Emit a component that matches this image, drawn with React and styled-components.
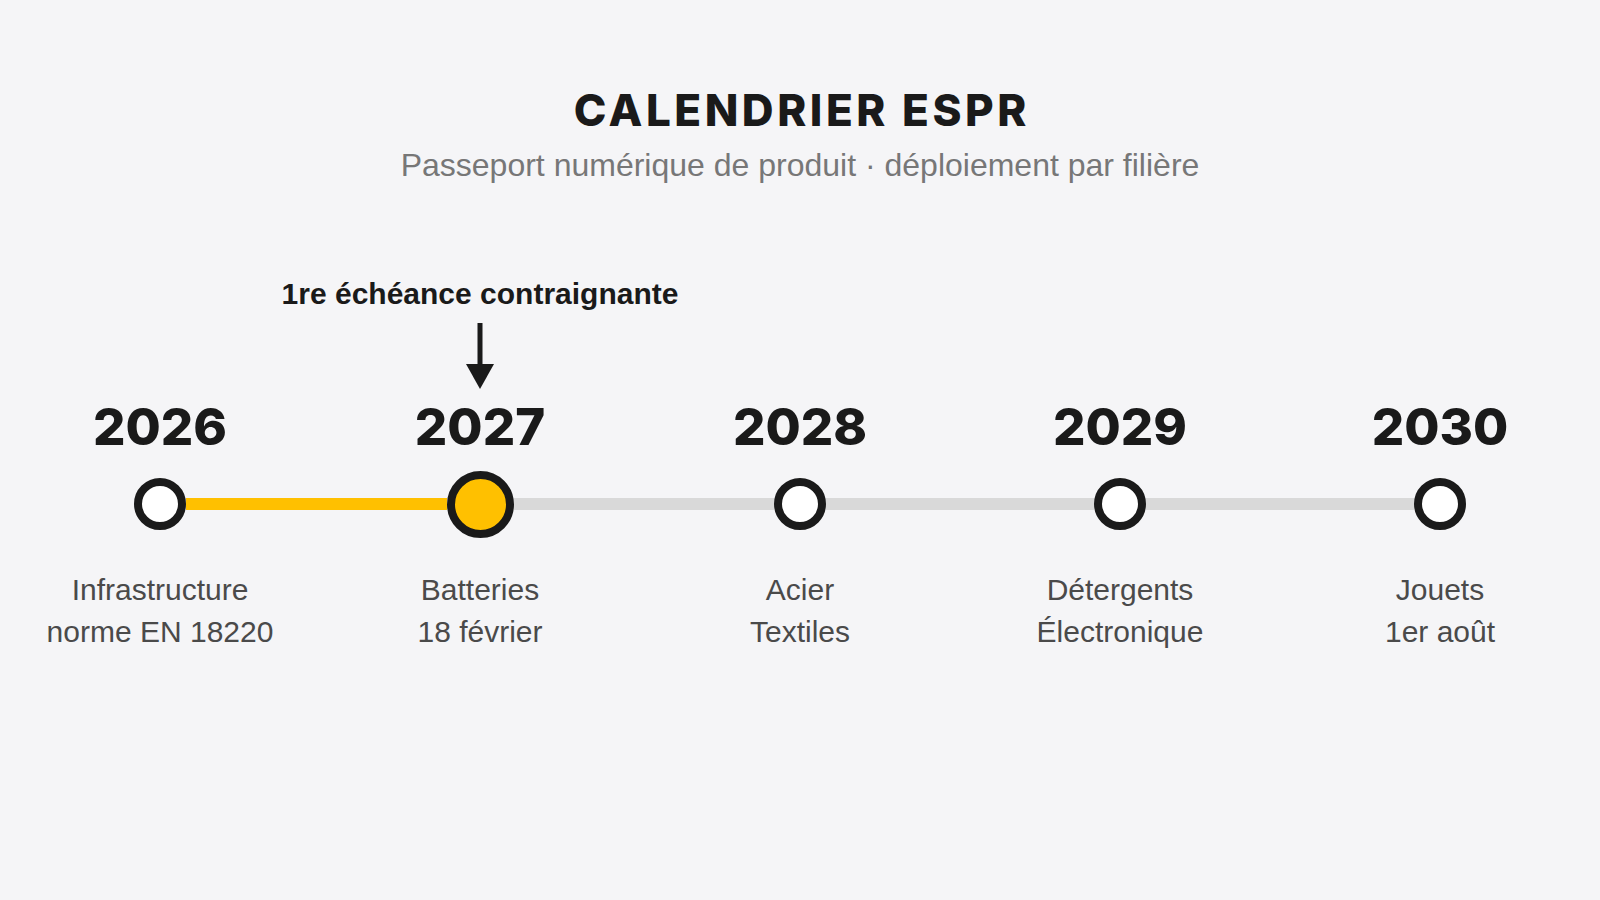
import React from 'react';
import styled, { createGlobalStyle } from 'styled-components';

const milestones = [
  { year: '2026', lines: ['Infrastructure', 'norme EN 18220'] },
  { year: '2027', lines: ['Batteries', '18 février'], active: true, note: '1re échéance contraignante' },
  { year: '2028', lines: ['Acier', 'Textiles'] },
  { year: '2029', lines: ['Détergents', 'Électronique'] },
  { year: '2030', lines: ['Jouets', '1er août'] },
];

const YELLOW = '#ffc000';
const GREY = '#d9d9d9';

function App() {
  const activeIndex = milestones.findIndex((m) => m.active);

  return (
    <>
      <GlobalStyle />
      <StyledPage>
        <StyledHeader>
          <StyledTitle>CALENDRIER ESPR</StyledTitle>
          <StyledSubtitle>Passeport numérique de produit · déploiement par filière</StyledSubtitle>
        </StyledHeader>
        <StyledTimeline>
          {milestones.map((m, i) => (
            <StyledColumn key={m.year}>
              <StyledMarkerSlot>
                {m.note && (
                  <>
                    <StyledNote>{m.note}</StyledNote>
                    <svg width="28" height="66" viewBox="0 0 28 66">
                      <rect x="11.5" y="0" width="5" height="42" fill="#1a1a1a" />
                      <polygon points="0,41 28,41 14,66" fill="#1a1a1a" />
                    </svg>
                  </>
                )}
              </StyledMarkerSlot>
              <StyledYear>{m.year}</StyledYear>
              <StyledDotRow>
                <StyledSegment $color={i === 0 ? 'transparent' : i <= activeIndex ? YELLOW : GREY} />
                <StyledDot $active={m.active} />
                <StyledSegment
                  $color={i === milestones.length - 1 ? 'transparent' : i < activeIndex ? YELLOW : GREY}
                />
              </StyledDotRow>
              <StyledLabel>
                {m.lines.map((line) => (
                  <div key={line}>{line}</div>
                ))}
              </StyledLabel>
            </StyledColumn>
          ))}
        </StyledTimeline>
      </StyledPage>
    </>
  );
}

export default App;

const GlobalStyle = createGlobalStyle`
  html, body {
    margin: 0;
    padding: 0;
    background: #f5f5f7;
  }
  body {
    font-family: "Liberation Sans", Arial, sans-serif;
    color: #1a1a1a;
  }
`;

const StyledPage = styled.div`
  width: 1600px;
  height: 900px;
  padding-top: 84px;
  box-sizing: border-box;
  overflow: hidden;
`;

const StyledHeader = styled.header`
  display: flex;
  flex-direction: column;
  align-items: center;
`;

const StyledTitle = styled.h1`
  margin: 0;
  font-family: Inter, "Liberation Sans", sans-serif;
  font-size: 44px;
  line-height: 52px;
  font-weight: 800;
  letter-spacing: 0.08em;
  text-indent: 0.08em;
  color: #1a1a1a;
`;

const StyledSubtitle = styled.p`
  margin: 9px 0 0;
  font-size: 32px;
  line-height: 40px;
  color: #777777;
`;

const StyledTimeline = styled.div`
  display: grid;
  grid-template-columns: repeat(5, minmax(0, 1fr));
  margin-top: 91px;
`;

const StyledColumn = styled.div`
  display: flex;
  flex-direction: column;
  align-items: center;
`;

const StyledMarkerSlot = styled.div`
  display: flex;
  flex-direction: column;
  align-items: center;
  gap: 11px;
  height: 121px;
`;

const StyledNote = styled.div`
  font-size: 30px;
  line-height: 36px;
  font-weight: 700;
  white-space: nowrap;
  color: #1a1a1a;
`;

const StyledYear = styled.div`
  font-family: Inter, "Liberation Sans", sans-serif;
  font-size: 51px;
  line-height: 60px;
  font-weight: 800;
  color: #1a1a1a;
`;

const StyledDotRow = styled.div`
  display: flex;
  align-items: center;
  align-self: stretch;
  height: 68px;
  margin-top: 13px;
`;

const StyledSegment = styled.div`
  flex: 1;
  height: 12px;
  background: ${(p) => p.$color};
`;

const StyledDot = styled.div`
  flex: none;
  box-sizing: border-box;
  width: ${(p) => (p.$active ? '67px' : '52px')};
  height: ${(p) => (p.$active ? '67px' : '52px')};
  border: 8px solid #1a1a1a;
  border-radius: 50%;
  background: ${(p) => (p.$active ? YELLOW : '#ffffff')};
`;

const StyledLabel = styled.div`
  margin-top: 31px;
  font-size: 30px;
  line-height: 42px;
  text-align: center;
  color: #4a4a4a;
`;
